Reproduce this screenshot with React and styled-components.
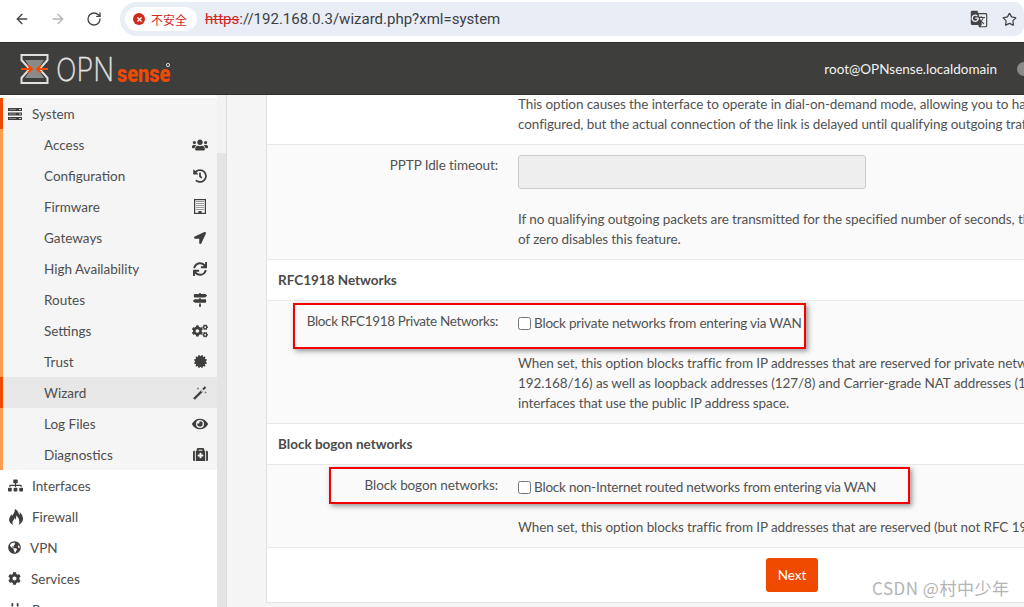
import styled, { createGlobalStyle } from "styled-components";
import { ArrowLeft, ArrowRight, RotateCw, Star } from "lucide-react";
import { MdGTranslate } from "react-icons/md";
import { ImFire } from "react-icons/im";
import {
  FaUsers, FaHistory, FaLocationArrow, FaSync, FaMapSigns, FaCogs,
  FaCertificate, FaEye, FaMedkit, FaSitemap, FaGlobeAmericas, FaCog, FaPlug, FaTimes,
} from "react-icons/fa";

const GlobalStyle = createGlobalStyle`
  html, body {
    margin: 0;
    height: 607px;
    overflow: hidden;
    background: #fff;
    font-family: "Lato", "Open Sans", sans-serif;
  }
  * { box-sizing: border-box; }
`;

const Page = styled.div`
  width: 1024px;
  height: 607px;
  display: flex;
  flex-direction: column;
  overflow: hidden;
  position: relative;
`;

/* browser chrome */
const BrowserBar = styled.div`
  height: 42px;
  flex: none;
  display: flex;
  align-items: flex-start;
  padding-top: 2px;
  background: #fff;
`;

const NavButtons = styled.div`
  width: 120px;
  height: 34px;
  flex: none;
  display: flex;
  align-items: center;
  padding-left: 14px;
  gap: 20px;
`;

const NavIcon = styled.span`
  display: flex;
  color: ${(p) => (p.$off ? "#b4b4b4" : "#444")};
`;

const UrlPill = styled.div`
  flex: 1;
  height: 34px;
  display: flex;
  align-items: center;
  background: #e8edf6;
  border-radius: 17px 10px 10px 17px;
  padding-left: 5px;
`;

const SecurityChip = styled.div`
  width: 72px;
  height: 24px;
  border-radius: 12px;
  background: #fff;
  display: flex;
  align-items: center;
  padding-left: 8px;
  gap: 6px;
  color: #d3271c;
  font: 12px "Noto Sans CJK SC", sans-serif;
`;

const RedDot = styled.span`
  width: 12px;
  height: 12px;
  border-radius: 50%;
  background: #cf2a1f;
  color: #fff;
  display: flex;
  align-items: center;
  justify-content: center;
  font-size: 7px;
`;

const Url = styled.div`
  margin-left: 8px;
  font: 15px "Roboto", sans-serif;
  color: #3c4043;
  flex: 1;
`;

const Https = styled.span`
  color: #d3271c;
  text-decoration: line-through;
`;

const PillIcons = styled.div`
  display: flex;
  align-items: center;
  gap: 14px;
  padding-right: 7px;
  color: #444;
`;

/* opnsense top bar */
const TopBar = styled.header`
  height: 53px;
  flex: none;
  background: #3e3e3c;
  border-top: 1px solid #2c2c2c;
  border-bottom: 1px solid #2f2f2e;
  display: flex;
  align-items: center;
  padding-left: 20px;
`;

const UserName = styled.span`
  margin-left: auto;
  color: #f2f2f2;
  font-size: 13.5px;
  white-space: nowrap;
`;

const Toggle = styled.span`
  width: 14px;
  height: 14px;
  border-radius: 50%;
  background: #8a8a8a;
  margin-left: 20px;
  margin-right: -7px;
  flex: none;
`;

const Body = styled.div`
  flex: 1;
  display: flex;
  min-height: 0;
  background: #f5f5f5;
`;

const Sidebar = styled.nav`
  width: 217px;
  flex: none;
  padding-top: 3px;
  background: #fff;
  overflow: hidden;
`;

const MenuRow = styled.div`
  height: 31px;
  display: flex;
  align-items: center;
  padding-left: ${(p) => (p.$sub ? "41px" : "5px")};
  padding-right: 9px;
  border-left: 3px solid ${(p) => (p.$active ? "#f04a00" : p.$sub ? "#ff9c4f" : "transparent")};
  background: ${(p) => (p.$active ? "#e7e7e7" : p.$sub || p.$open ? "#f5f5f5" : "#fff")};
  color: #4e4e4e;
  font-size: 13.5px;
  ${(p) => p.$open && "border-left-color: #f04a00;"}
`;

const RowIcon = styled.span`
  width: ${(p) => p.$w || 24}px;
  flex: none;
  display: flex;
  font-size: ${(p) => p.$size || 14}px;
  color: #3e3e3c;
`;

const SubIcon = styled.span`
  margin-left: auto;
  width: 16px;
  display: flex;
  justify-content: center;
  font-size: ${(p) => p.$size || 14}px;
  color: #3e3e3c;
`;

const Track = styled.div`
  width: 9px;
  flex: none;
  display: flex;
  flex-direction: column;
  background: #f3f3f3;
`;

const Thumb = styled.div`
  margin-top: 58px;
  flex: 1;
  background: #e4e4e4;
`;

const Main = styled.main`
  flex: 1;
  min-width: 0;
  border-left: 1px solid #dcdcdc;
  padding-left: 39px;
  overflow: hidden;
`;

const Panel = styled.section`
  background: #fff;
  border-left: 1px solid #e0e0e0;
  overflow: hidden;
  color: #525252;
  font-size: 13.5px;
  line-height: 20px;
`;

const Row = styled.div`
  position: relative;
  display: grid;
  grid-template-columns: 231px 1fr;
  column-gap: 20px;
  padding: 10px 0;
  background: #fafafa;
  border-bottom: 1px solid #eaeaea;
`;

const TopRow = styled(Row)`
  padding-top: 0;
  margin-top: -1px;
  background: #fff;
`;

const Label = styled.div`
  text-align: right;
  white-space: nowrap;
  letter-spacing: ${(p) => (p.$tight ? "-0.35px" : "-0.1px")};
`;

const Value = styled.div`
  min-width: 0;
`;

const Help = styled.div`
  margin-top: ${(p) => p.$gap || 0}px;
  white-space: nowrap;
  letter-spacing: -0.09px;
`;

const Heading = styled.h3`
  margin: 0;
  height: 41px;
  padding-left: 11px;
  font-size: 13.5px;
  font-weight: 700;
  line-height: 40px;
  color: #4a4a4a;
  border-bottom: 1px solid #eaeaea;
`;

const TextInput = styled.input`
  display: block;
  width: 348px;
  height: 34px;
  background: #eee;
  border: 1px solid #ccc;
  border-radius: 3px;
`;

const CheckLine = styled.label`
  display: flex;
  align-items: center;
  margin-top: 2px;
  gap: 3px;
  letter-spacing: -0.2px;
`;

const Check = styled.input`
  margin: 0;
  width: 13px;
  height: 13px;
`;

const Callout = styled.div`
  position: absolute;
  left: ${(p) => p.$left}px;
  top: ${(p) => p.$top}px;
  width: ${(p) => p.$width}px;
  height: ${(p) => p.$height}px;
  border: 2px solid #f40000;
  box-shadow: 2px 2px 5px rgba(60, 60, 60, 0.55);
  pointer-events: none;
`;

const ButtonRow = styled.div`
  height: 55px;
  display: flex;
  justify-content: center;
  align-items: center;
  padding-left: 293px;
  width: 757px;
  border-bottom: 1px solid #e4e4e4;
`;

const NextButton = styled.button`
  width: 52px;
  height: 34px;
  border: 0;
  border-radius: 3px;
  background: #f04a00;
  color: #fff;
  font: inherit;
`;

const Watermark = styled.div`
  position: absolute;
  left: 872px;
  top: 575px;
  font: 17px "Noto Sans CJK SC", sans-serif;
  letter-spacing: 0.5px;
  color: #b4b4b4;
  white-space: nowrap;
`;

const ServerIcon = () => (
  <svg width="14" height="12" viewBox="0 0 14 12">
    <path d="M0 0h14v3H0zM0 4.5h14v3H0zM0 9h14v3H0z" fill="#3e3e3c" />
    <path d="M1 1.5h7M1 6h7M1 10.5h7" stroke="#9a9a9a" strokeWidth="0.8" />
    <path d="M11 1.5h2M11 6h2M11 10.5h2" stroke="#f5f5f5" strokeWidth="1" strokeDasharray="0.8 0.4" />
  </svg>
);

const BuildingIcon = () => (
  <svg width="12" height="15" viewBox="0 0 12 15">
    <rect x="0.6" y="0.6" width="10.8" height="13.8" fill="none" stroke="#3e3e3c" strokeWidth="1.2" />
    <path d="M2.5 2.5h7M2.5 4.5h7M2.5 6.5h7M2.5 8.5h7M2.5 10.5h7" stroke="#3e3e3c" strokeWidth="1" strokeDasharray="1 1" />
    <rect x="4.5" y="12" width="3" height="2.5" fill="#3e3e3c" />
  </svg>
);

const WandIcon = () => (
  <svg width="14" height="14" viewBox="0 0 14 14">
    <path d="M1 13L9 5" stroke="#3e3e3c" strokeWidth="2.4" />
    <path d="M8 6l2.5-2.5" stroke="#f5f5f5" strokeWidth="0.7" />
    <path d="M10 3.5L12.5 1" stroke="#3e3e3c" strokeWidth="2" />
    <path d="M4 2.5h2M5 1.5v2M11.5 6.5h2M12.5 5.5v2" stroke="#777" strokeWidth="0.8" />
  </svg>
);

const items = [
  ["Access", FaUsers, 16],
  ["Configuration", FaHistory, 14],
  ["Firmware", BuildingIcon, 14],
  ["Gateways", FaLocationArrow, 12],
  ["High Availability", FaSync, 14],
  ["Routes", FaMapSigns, 14],
  ["Settings", FaCogs, 16],
  ["Trust", FaCertificate, 13],
  ["Wizard", WandIcon, 14],
  ["Log Files", FaEye, 16],
  ["Diagnostics", FaMedkit, 15],
];

const sections = [
  ["Interfaces", FaSitemap, 24, 15],
  ["Firewall", ImFire, 24, 16],
  ["VPN", FaGlobeAmericas, 22, 13],
  ["Services", FaCog, 23, 13],
  ["Power", FaPlug, 24, 14],
];

const Logo = () => (
  <svg width="156" height="32" viewBox="0 0 156 32">
    <path d="M5 7h19l-6 9 6 9H5l6-9z" fill="#8a8a8a" />
    <path d="M1.5 2h26v5l-8 9 8 9v5h-26v-5l8-9-8-9z" fill="none" stroke="#e0e0e0" strokeWidth="2" />
    <path d="M1 16h10M28 16H18M8 12.5l4 3.5-4 3.5M21 12.5L17 16l4 3.5" fill="none" stroke="#f04a00" strokeWidth="2" />
    <text transform="translate(36 28) scale(0.85 1)" fontFamily="Inter, sans-serif" fontWeight="200" fontSize="32" fill="#e4e4e4" stroke="#e4e4e4" strokeWidth="0.3">OPN</text>
    <text transform="translate(97 29) scale(0.83 1)" fontFamily="Roboto, sans-serif" fontWeight="900" fontSize="24" fill="#f04a00">sense</text>
    <circle cx="148" cy="12" r="1.6" fill="none" stroke="#d8d8d8" />
  </svg>
);

export default function App() {
  return (
    <Page>
      <GlobalStyle />
      <BrowserBar>
        <NavButtons>
          <NavIcon><ArrowLeft size={16} strokeWidth={2} /></NavIcon>
          <NavIcon $off><ArrowRight size={16} strokeWidth={2} /></NavIcon>
          <NavIcon><RotateCw size={16} strokeWidth={2} /></NavIcon>
        </NavButtons>
        <UrlPill>
          <SecurityChip>
            <RedDot><FaTimes /></RedDot>
            不安全
          </SecurityChip>
          <Url><Https>https</Https>://192.168.0.3/wizard.php?xml=system</Url>
          <PillIcons>
            <MdGTranslate size={18} />
            <Star size={15} strokeWidth={2} />
          </PillIcons>
        </UrlPill>
      </BrowserBar>

      <TopBar>
        <Logo />
        <UserName>root@OPNsense.localdomain</UserName>
        <Toggle />
      </TopBar>

      <Body>
        <Sidebar>
          <MenuRow $open>
            <RowIcon><ServerIcon /></RowIcon>System
          </MenuRow>
          {items.map(([name, Icon, size]) => (
            <MenuRow key={name} $sub $active={name === "Wizard"}>
              {name}
              <SubIcon $size={size}><Icon /></SubIcon>
            </MenuRow>
          ))}
          {sections.map(([name, Icon, w, size]) => (
            <MenuRow key={name}>
              <RowIcon $w={w} $size={size}><Icon /></RowIcon>{name}
            </MenuRow>
          ))}
        </Sidebar>
        <Track><Thumb /></Track>
        <Main>
          <Panel>
            <TopRow>
              <span />
              <Value>
                <Help>This option causes the interface to operate in dial-on-demand mode, allowing you to have a virtual full time connection. The interface is</Help>
                <Help>configured, but the actual connection of the link is delayed until qualifying outgoing traffic is detected.</Help>
              </Value>
            </TopRow>
            <Row>
              <Label>PPTP Idle timeout:</Label>
              <Value>
                <TextInput disabled />
                <Help $gap={20}>If no qualifying outgoing packets are transmitted for the specified number of seconds, the connection is brought down. An idle timeout</Help>
                <Help>of zero disables this feature.</Help>
              </Value>
            </Row>
            <Heading>RFC1918 Networks</Heading>
            <Row>
              <Label $tight>Block RFC1918 Private Networks:</Label>
              <Value>
                <CheckLine>
                  <Check type="checkbox" readOnly />
                  Block private networks from entering via WAN
                </CheckLine>
                <Help $gap={20}>When set, this option blocks traffic from IP addresses that are reserved for private networks per RFC 1918 (10/8, 172.16/12,</Help>
                <Help>192.168/16) as well as loopback addresses (127/8) and Carrier-grade NAT addresses (100.64/10). You should generally leave this option turned on, unless</Help>
                <Help>interfaces that use the public IP address space.</Help>
              </Value>
              <Callout $left={26} $top={2} $width={513} $height={46} />
            </Row>
            <Heading>Block bogon networks</Heading>
            <Row>
              <Label>Block bogon networks:</Label>
              <Value>
                <CheckLine>
                  <Check type="checkbox" readOnly />
                  Block non-Internet routed networks from entering via WAN
                </CheckLine>
                <Help $gap={20}>When set, this option blocks traffic from IP addresses that are reserved (but not RFC 1918) or not yet assigned by IANA.</Help>
              </Value>
              <Callout $left={62} $top={2} $width={581} $height={37} />
            </Row>
            <ButtonRow>
              <NextButton>Next</NextButton>
            </ButtonRow>
          </Panel>
        </Main>
      </Body>
      <Watermark>CSDN @村中少年</Watermark>
    </Page>
  );
}
